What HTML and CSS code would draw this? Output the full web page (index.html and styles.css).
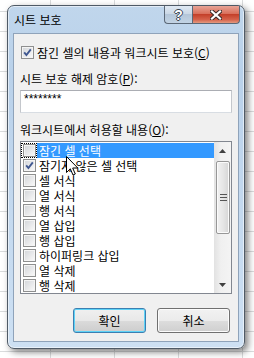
FILE: index.html
```html
<!DOCTYPE html>
<html lang="ko">
<head>
    <meta charset="UTF-8">
    <title>시트 보호</title>
    <link rel="stylesheet" href="styles.css">
</head>
<body>
    <div class="window">
        <div class="titlebar">
            <span class="title">시트 보호</span>
            <div class="caption-btns">
                <span class="cap help">?</span>
                <span class="cap close">
                    <svg width="12" height="10" viewBox="0 0 12 10">
                        <path d="M2 1.5 L10 8.5 M10 1.5 L2 8.5" stroke="#3b2a28" stroke-width="4.2" stroke-linecap="square"/>
                        <path d="M2 1.5 L10 8.5 M10 1.5 L2 8.5" stroke="#fff" stroke-width="2.2" stroke-linecap="square"/>
                    </svg>
                </span>
            </div>
        </div>

        <div class="client">
            <div class="check-row">
                <span class="cb checked"><svg viewBox="0 0 11 11"><path d="M2.2 5.4 L4.4 8 L8.8 2.4" fill="none" stroke="#3f5790" stroke-width="1.9"/></svg></span>
                <span>잠긴 셀의 내용과 워크시트 보호(<u>C</u>)</span>
            </div>

            <div class="label pw-label">시트 보호 해제 암호(<u>P</u>):</div>
            <div class="textbox">********</div>

            <div class="label list-label">워크시트에서 허용할 내용(<u>O</u>):</div>
            <div class="listbox">
                <ul class="items">
                    <li class="item selected"><span class="cell"><span class="cb"></span></span><span class="text">잠긴 셀 선택</span></li>
                    <li class="item"><span class="cell"><span class="cb checked"><svg viewBox="0 0 11 11"><path d="M2.2 5.4 L4.4 8 L8.8 2.4" fill="none" stroke="#3f5790" stroke-width="1.9"/></svg></span></span><span class="text">잠기지 않은 셀 선택</span></li>
                    <li class="item"><span class="cell"><span class="cb"></span></span><span class="text">셀 서식</span></li>
                    <li class="item"><span class="cell"><span class="cb"></span></span><span class="text">열 서식</span></li>
                    <li class="item"><span class="cell"><span class="cb"></span></span><span class="text">행 서식</span></li>
                    <li class="item"><span class="cell"><span class="cb"></span></span><span class="text">열 삽입</span></li>
                    <li class="item"><span class="cell"><span class="cb"></span></span><span class="text">행 삽입</span></li>
                    <li class="item"><span class="cell"><span class="cb"></span></span><span class="text">하이퍼링크 삽입</span></li>
                    <li class="item"><span class="cell"><span class="cb"></span></span><span class="text">열 삭제</span></li>
                    <li class="item"><span class="cell"><span class="cb"></span></span><span class="text">행 삭제</span></li>
                </ul>
                <div class="scrollbar">
                    <div class="arrow">
                        <svg width="7" height="4" viewBox="0 0 7 4"><path d="M0 4 L3.5 0 L7 4 Z" fill="#404040"/></svg>
                    </div>
                    <div class="thumb"><span class="grip"></span></div>
                    <div class="track"></div>
                    <div class="arrow">
                        <svg width="7" height="4" viewBox="0 0 7 4"><path d="M0 0 L3.5 4 L7 0 Z" fill="#404040"/></svg>
                    </div>
                </div>
            </div>

            <div class="buttons">
                <button class="btn default">확인</button>
                <button class="btn">취소</button>
            </div>
        </div>
    </div>

    <!-- mouse pointer over the list -->
    <svg class="cursor" width="13" height="21" viewBox="0 0 13 21">
        <path d="M0.5 0.5 L0.5 16.5 L4.3 12.8 L7 19 L9.3 18 L6.7 12 L11.8 12 Z" fill="#fff" stroke="#000" stroke-width="1" stroke-linejoin="miter"/>
    </svg>
</body>
</html>
```

FILE: styles.css
```css
* {
    box-sizing: border-box;
    margin: 0;
    padding: 0;
}

body {
    font-family: "Noto Sans CJK KR", "Noto Sans", sans-serif;
    font-size: 12px;
    color: #000;
    padding: 5px 0 0 7px;
    height: 358px;
    overflow: hidden;
    position: relative;
    background-color: #fff;
    background-image:
        linear-gradient(to right, #dadcdd 1px, transparent 1px),
        linear-gradient(to bottom, #dadcdd 1px, transparent 1px);
    background-size: 64px 20px;
    background-position: 50px 11px;
}

.window {
    width: 238px;
    border: 1px solid #4f5a66;
    border-radius: 7px;
    padding: 0 5px 6px 5px;
    background: linear-gradient(to bottom, #c0d6ec 0%, #b9d1ea 20%, #c4d9ef 60%, #cde0f3 100%);
    box-shadow: inset 0 0 0 1px rgba(255, 255, 255, 0.55), 3px 3px 7px rgba(0, 0, 0, 0.5);
}

.titlebar {
    height: 27px;
    display: flex;
    justify-content: space-between;
    align-items: flex-start;
}

.title {
    line-height: 16px;
    padding: 6px 0 0 1px;
}

.caption-btns {
    display: flex;
    margin-right: -1px;
}

.cap {
    height: 18px;
    display: flex;
    align-items: center;
    justify-content: center;
    border: 1px solid #5b6877;
    border-top: none;
}

.help {
    width: 28px;
    border-right: none;
    border-bottom-left-radius: 4px;
    background: linear-gradient(to bottom, #e0e9f3 0%, #cbd8e6 45%, #b4c6d9 50%, #c2d3e4 100%);
    color: #fff;
    font-family: "Liberation Sans", sans-serif;
    font-weight: bold;
    font-size: 14px;
    line-height: 16px;
    text-shadow: 1px 0 0 #38434f, -1px 0 0 #38434f, 0 1px 0 #38434f, 0 -1px 0 #38434f;
}

.close {
    width: 48px;
    border-bottom-right-radius: 4px;
    background: linear-gradient(to bottom, #e8a496 0%, #d9705c 45%, #c4402a 50%, #d5624b 80%, #e39a80 100%);
}

.client {
    width: 226px;
    border: 1px solid #8fa3ba;
    background: #f0f0f0;
    padding: 0 6px 8px;
}

.check-row {
    display: flex;
    align-items: center;
    height: 16px;
    margin-top: 10px;
    padding-left: 1px;
    gap: 3px;
    white-space: nowrap;
}

.cb {
    display: block;
    width: 13px;
    height: 13px;
    border: 1px solid #8e8f8f;
    background: linear-gradient(135deg, #d2d5d9 0%, #e6e7e9 50%, #fbfbfb 100%);
    box-shadow: inset 0 0 0 1px #f4f4f4;
}

.cb svg {
    display: block;
    width: 11px;
    height: 11px;
}

.label {
    line-height: 16px;
    height: 16px;
    white-space: nowrap;
}

.pw-label {
    margin-top: 11px;
}

.textbox {
    margin-top: 3px;
    height: 23px;
    background: #fff;
    border: 1px solid #abadb3;
    border-left-color: #c4c7cc;
    border-right-color: #c4c7cc;
    border-bottom-color: #d8dde3;
    padding-left: 3px;
    font-family: "Liberation Sans", sans-serif;
    font-size: 12px;
    line-height: 17px;
}

.list-label {
    margin-top: 9px;
}

.listbox {
    margin-top: 3px;
    height: 153px;
    background: #fff;
    border: 1px solid #828790;
    display: flex;
}

.items {
    list-style: none;
    flex: 1;
    padding-top: 1px;
}

.item {
    display: flex;
    height: 15px;
    white-space: nowrap;
}

.cell {
    width: 16px;
    height: 15px;
    padding: 1px 0 0 2px;
}

.text {
    flex: 1;
    padding-left: 2px;
    line-height: 15px;
}

.item.selected .cell {
    outline: 1px dotted #000;
    outline-offset: -1px;
}

.item.selected .text {
    background: #3399ff;
    color: #fff;
}

.scrollbar {
    width: 17px;
    display: flex;
    flex-direction: column;
    background: linear-gradient(to right, #e2e2e2, #f0f0f0 40%, #f4f4f4);
}

.arrow {
    height: 17px;
    display: flex;
    align-items: center;
    justify-content: center;
}

.arrow svg {
    display: block;
}

.thumb {
    height: 73px;
    margin: 2px 1px 0 2px;
    border: 1px solid #979797;
    border-radius: 2px;
    background: linear-gradient(to right, #f2f2f2, #e6e6e6 50%, #d6d6d6);
    box-shadow: inset 0 0 0 1px #fbfbfb;
    display: flex;
    align-items: center;
    justify-content: center;
}

.grip {
    width: 7px;
    height: 7px;
    background: linear-gradient(to bottom, #555 1px, transparent 1px, transparent 3px, #555 3px, #555 4px, transparent 4px, transparent 6px, #555 6px);
}

.track {
    flex: 1;
}

.buttons {
    display: flex;
    justify-content: flex-end;
    gap: 11px;
    margin-top: 14px;
    padding-right: 2px;
}

.btn {
    width: 73px;
    height: 25px;
    border: 1px solid #707070;
    border-radius: 3px;
    background: linear-gradient(to bottom, #f2f2f2 0%, #ebebeb 50%, #dddddd 51%, #cfcfcf 100%);
    box-shadow: inset 0 0 0 1px #fcfcfc;
    font-family: inherit;
    font-size: 12px;
    color: #000;
}

.btn.default {
    border-color: #3c7fb1;
    box-shadow: inset 0 0 0 1px #5ed3f7;
    background: linear-gradient(to bottom, #eaf6fd 0%, #d9f0fc 50%, #bee6fd 51%, #a7d9f5 100%);
    background: linear-gradient(to bottom, #f0f0f0 0%, #e8e8e8 50%, #dbdbdb 51%, #cdcdcd 100%);
}

.cursor {
    position: absolute;
    left: 66px;
    top: 156px;
}
```
